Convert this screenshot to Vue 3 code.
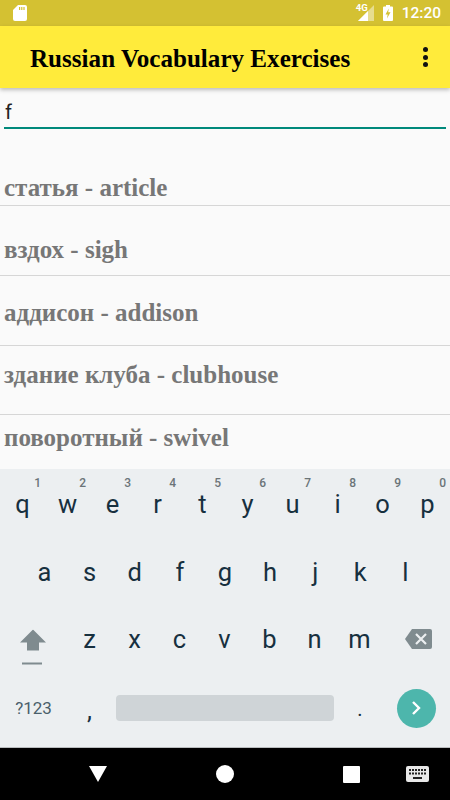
<script setup>
const words = ['статья - article', 'вздох - sigh', 'аддисон - addison', 'здание клуба - clubhouse', 'поворотный - swivel']
const row1 = [['q','1'],['w','2'],['e','3'],['r','4'],['t','5'],['y','6'],['u','7'],['i','8'],['o','9'],['p','0']]
const row2 = ['a','s','d','f','g','h','j','k','l']
const row3 = ['z','x','c','v','b','n','m']
</script>

<template>
  <div class="phone">
    <div class="status">
      <svg class="sd" width="14" height="16" viewBox="0 0 14 16"><path fill="#fff" d="M5 0h7a2 2 0 0 1 2 2v12a2 2 0 0 1-2 2H2a2 2 0 0 1-2-2V5z"/><path fill="#d4c132" d="M6 2h1.200v3H6zM8.200 2h1.200v3H8.200zM10.400 2h1.200v3h-1.200z"/></svg>
      <div class="status-right">
        <span class="net">4G</span>
        <svg class="signal" width="16" height="16" viewBox="0 0 16 16"><path fill="#fff" fill-opacity=".45" d="M16 0v16H0z"/><path fill="#fff" d="M10 6v10H0z"/></svg>
        <svg class="battery" width="10" height="16" viewBox="0 0 10 16"><path fill="#fff" d="M3 0h4v1.500h2a1 1 0 0 1 1 1V15a1 1 0 0 1-1 1H1a1 1 0 0 1-1-1V2.500a1 1 0 0 1 1-1h2z"/><path fill="#d4c132" d="M5.800 3.500 2.500 9.500h2.200L4 13.500 7.500 7.300H5.200z"/></svg>
        <span class="time">12:20</span>
      </div>
    </div>
    <header class="appbar">
      <span class="title">Russian Vocabulary Exercises</span>
      <span class="dots"><i></i><i></i><i></i></span>
    </header>
    <main class="content">
      <div class="input">f</div>
      <ul class="list">
        <li v-for="w in words" :key="w">{{ w }}</li>
      </ul>
    </main>
    <section class="keyboard">
      <div class="row r1">
        <div v-for="k in row1" :key="k[0]" class="key">{{ k[0] }}<sup>{{ k[1] }}</sup></div>
      </div>
      <div class="row r2">
        <div v-for="k in row2" :key="k" class="key">{{ k }}</div>
      </div>
      <div class="row r3">
        <div class="side">
          <svg width="26" height="38" viewBox="0 0 26 38"><path fill="#7f8b8f" d="M13 0 26 13H19V21H7V13H0z"/><rect x="2" y="33" width="20" height="2" fill="#7f8b8f"/></svg>
        </div>
        <div v-for="k in row3" :key="k" class="key">{{ k }}</div>
        <div class="side">
          <svg width="27" height="20" viewBox="0 0 27 20"><path fill="#7f8b8f" d="M7 0h18a2 2 0 0 1 2 2v16a2 2 0 0 1-2 2H7L0 10z"/><path stroke="#eceff1" stroke-width="2.200" d="m11 5 10 10M21 5 11 15"/></svg>
        </div>
      </div>
      <div class="row r4">
        <div class="sym">?123</div>
        <div class="comma">,</div>
        <div class="spacebar"></div>
        <div class="period">.</div>
        <div class="go-wrap">
          <span class="go"><svg width="14" height="16" viewBox="0 0 14 16"><path fill="none" stroke="#fff" stroke-width="2.400" d="m4 2 6 6-6 6"/></svg></span>
        </div>
      </div>
    </section>
    <nav class="navbar">
      <svg class="back" width="18" height="16" viewBox="0 0 18 16"><path fill="#fff" d="M0 0h18L9 16z"/></svg>
      <span class="home"></span>
      <span class="recent"></span>
      <svg class="kbd" width="23" height="16" viewBox="0 0 23 16"><rect width="23" height="16" rx="2" fill="#e8e8e8"/><path fill="#222" d="M3 3h2v2H3zM6 3h2v2H6zM9 3h2v2H9zM12 3h2v2h-2zM15 3h2v2h-2zM18 3h2v2h-2zM3 6.500h2v2H3zM6 6.500h2v2H6zM9 6.500h2v2H9zM12 6.500h2v2h-2zM15 6.500h2v2h-2zM18 6.500h2v2h-2zM7 11h9v2H7z"/></svg>
    </nav>
  </div>
</template>

<style>
body { margin: 0; }
</style>

<style scoped>
.phone { width: 450px; height: 800px; display: flex; flex-direction: column; background: #fafafa; overflow: hidden; }
.status { height: 26px; flex: none; background: #d4c132; display: flex; align-items: center; justify-content: space-between; padding: 0 9px 0 13px; box-sizing: border-box; }
.status-right { display: flex; align-items: center; color: #fff; font-family: Roboto, sans-serif; }
.net { font-size: 9.500px; font-weight: 700; margin-right: -10px; margin-top: -11px; position: relative; }
.signal { margin: 0 9px 0 0; }
.battery { margin: 0 9px 0 0; }
.time { font-size: 15.500px; font-weight: 500; }
.appbar { height: 62px; flex: none; background: #ffeb3b; display: flex; align-items: center; justify-content: space-between; padding: 0 22px 0 30px; box-sizing: border-box; box-shadow: 0 2px 4px rgba(0,0,0,.25); position: relative; z-index: 1; }
.title { font: 700 25.100px "Liberation Serif", serif; color: #000; margin-top: 3px; }
.dots { display: flex; flex-direction: column; gap: 2.500px; }
.dots i { width: 5px; height: 5px; border-radius: 50%; background: #111; }
.content { flex: 1; min-height: 0; overflow: hidden; }
.input { margin: 12px 4px 0; height: 27px; border-bottom: 2px solid #00897b; font: 20px/25px Roboto, sans-serif; color: #222; padding-left: 1px; }
.list { list-style: none; margin: 0; padding: 0; }
.list li { height: 70px; box-sizing: border-box; border-bottom: 1px solid #d6d6d6; font: 700 25px/28px "Liberation Serif", serif; color: #777; padding-left: 4px; }
.list li:nth-child(1) { height: 77px; padding-top: 45px; }
.list li:nth-child(2) { padding-top: 30px; }
.list li:nth-child(3) { height: 69.500px; padding-top: 22.500px; }
.list li:nth-child(4) { height: 69.500px; padding-top: 15.500px; }
.list li:nth-child(5) { padding-top: 8.500px; border-bottom: 0; }
.keyboard { height: 279px; flex: none; background: #eceff1; border-bottom: 1px solid #b9bcbe; box-sizing: border-box; color: #17303f; font-family: Roboto, sans-serif; }
.row { display: flex; align-items: center; }
.key { flex: 1; text-align: center; font-size: 25.500px; position: relative; }
.key sup { position: absolute; right: 4px; top: -12px; font-size: 12px; font-weight: 500; color: #6b7478; line-height: 1; }
.r1 { height: 69px; }
.r2 { height: 67px; padding: 0 22px; }
.r3 { height: 67px; }
.r3 .side { width: 67px; flex: none; display: flex; justify-content: center; }
.r3 .side:first-child svg { margin-top: 4px; transform: translate(-1px, 7.500px); }
.r3 .side:last-child svg { transform: translate(3px, 0); }
.r3 .key { flex: 45px 0 0; }
.r4 { height: 72px; }
.sym { width: 67px; text-align: center; font-size: 17px; color: #4a5f6b; }
.comma { width: 45px; text-align: center; font-size: 25px; margin-top: 4px; }
.spacebar { width: 218px; height: 26px; border-radius: 4px; background: #cfd4d7; margin-left: 4px; }
.period { width: 52px; text-align: center; font-size: 20px; margin-top: 2px; }
.go-wrap { width: 49.500px; display: flex; justify-content: flex-end; }
.go { width: 39px; height: 39px; border-radius: 50%; background: #4db6ac; display: flex; align-items: center; justify-content: center; }
.navbar { height: 52px; flex: none; background: #000; display: flex; align-items: center; padding-left: 89px; }
.home { width: 18px; height: 18px; border-radius: 50%; background: #fff; margin-left: 109px; }
.recent { width: 17px; height: 17px; background: #fff; border-radius: 1px; margin-left: 109px; }
.kbd { margin-left: 46px; }
</style>
